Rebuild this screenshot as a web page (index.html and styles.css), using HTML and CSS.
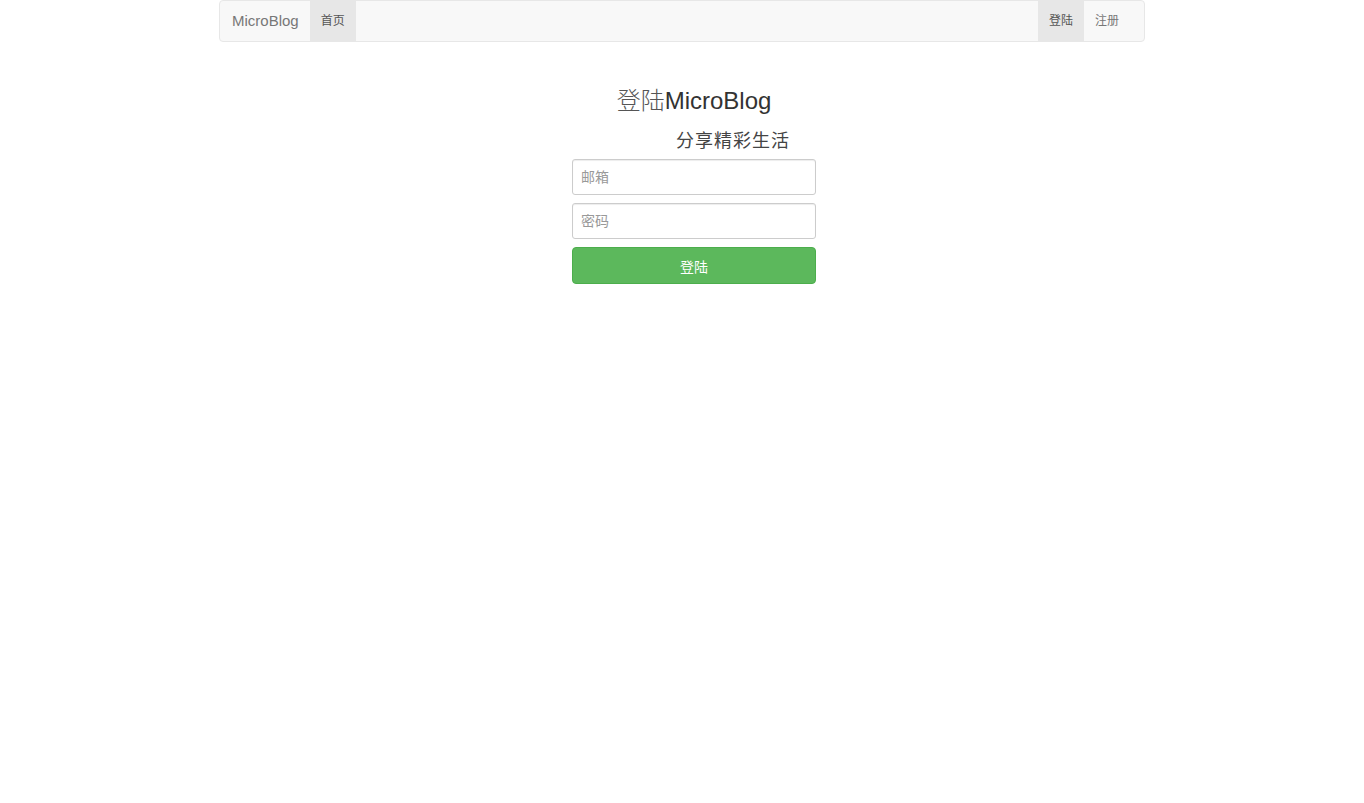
FILE: index.html
```html
<!DOCTYPE html>
<html lang="zh-CN">

<head>
    <meta charset="utf-8">
    <meta name="viewport" content="width=device-width, initial-scale=1.0">
    <title>登陆 - MicroBlog</title>
    <link rel="stylesheet" href="styles.css">
</head>

<body>
    <nav class="navbar">
        <div class="nav-left">
            <a class="brand" href="#">MicroBlog</a>
            <a class="nav-link active" href="#">首页</a>
        </div>
        <div class="nav-right">
            <a class="nav-link active" href="#">登陆</a>
            <a class="nav-link" href="#">注册</a>
        </div>
    </nav>

    <div class="login">
        <h2 class="title"><span class="cn">登陆</span>MicroBlog</h2>
        <h3 class="sub">分享精彩生活</h3>
        <form>
            <input class="field" type="email" placeholder="邮箱">
            <input class="field" type="password" placeholder="密码">
            <button class="btn" type="submit">登陆</button>
        </form>
    </div>
</body>

</html>
```

FILE: styles.css
```css
body {
    margin: 0;
    font-family: "Liberation Sans", Arial, "Noto Sans CJK SC", sans-serif;
    font-size: 14px;
    color: #333;
    background: #fff;
}

a {
    text-decoration: none;
}

.navbar {
    width: 924px;
    height: 40px;
    margin: 0 auto;
    display: flex;
    justify-content: space-between;
    background-color: #f8f8f8;
    border: 1px solid #e7e7e7;
    border-radius: 4px;
}

.nav-left,
.nav-right {
    display: flex;
}

.nav-right {
    margin-right: 14px;
}

.brand {
    padding: 0 11px 0 12px;
    line-height: 40px;
    font-size: 15px;
    color: #777;
}

.nav-link {
    width: 46px;
    text-align: center;
    line-height: 40px;
    height: 40px;
    font-size: 12px;
    color: #777;
}

.nav-link.active {
    background-color: #e7e7e7;
    color: #555;
}

.login {
    width: 244px;
    padding-left: 24px;
    margin: 0 auto;
}

.title {
    margin: 42px 0 0 -13px;
    width: 270px;
    text-align: center;
    font-size: 24px;
    font-weight: normal;
    line-height: 30px;
    color: #333;
}

.title .cn {
    font-family: "Noto Sans CJK SC", sans-serif;
    font-weight: 300;
    color: #555;
}

.sub {
    margin: 15px 0 0 104px;
    font-size: 18px;
    font-weight: normal;
    letter-spacing: 1px;
    line-height: 20px;
    color: #444;
}

form {
    margin-top: 8px;
    display: flex;
    flex-direction: column;
    gap: 8px;
}

.field {
    box-sizing: border-box;
    width: 244px;
    height: 36px;
    margin: 0;
    padding: 6px 8px;
    border: 1px solid #ccc;
    border-radius: 3px;
    box-shadow: inset 0 1px 1px rgba(0, 0, 0, .075);
    font-family: "Liberation Sans", "Noto Sans CJK SC", sans-serif;
    font-size: 14px;
    color: #555;
}

.field::placeholder {
    color: #999;
}

.btn {
    width: 244px;
    height: 37px;
    background-color: #5cb85c;
    border: 1px solid #4cae4c;
    border-radius: 4px;
    color: #fff;
    font-family: "Liberation Sans", "Noto Sans CJK SC", sans-serif;
    font-size: 14px;
}
```
